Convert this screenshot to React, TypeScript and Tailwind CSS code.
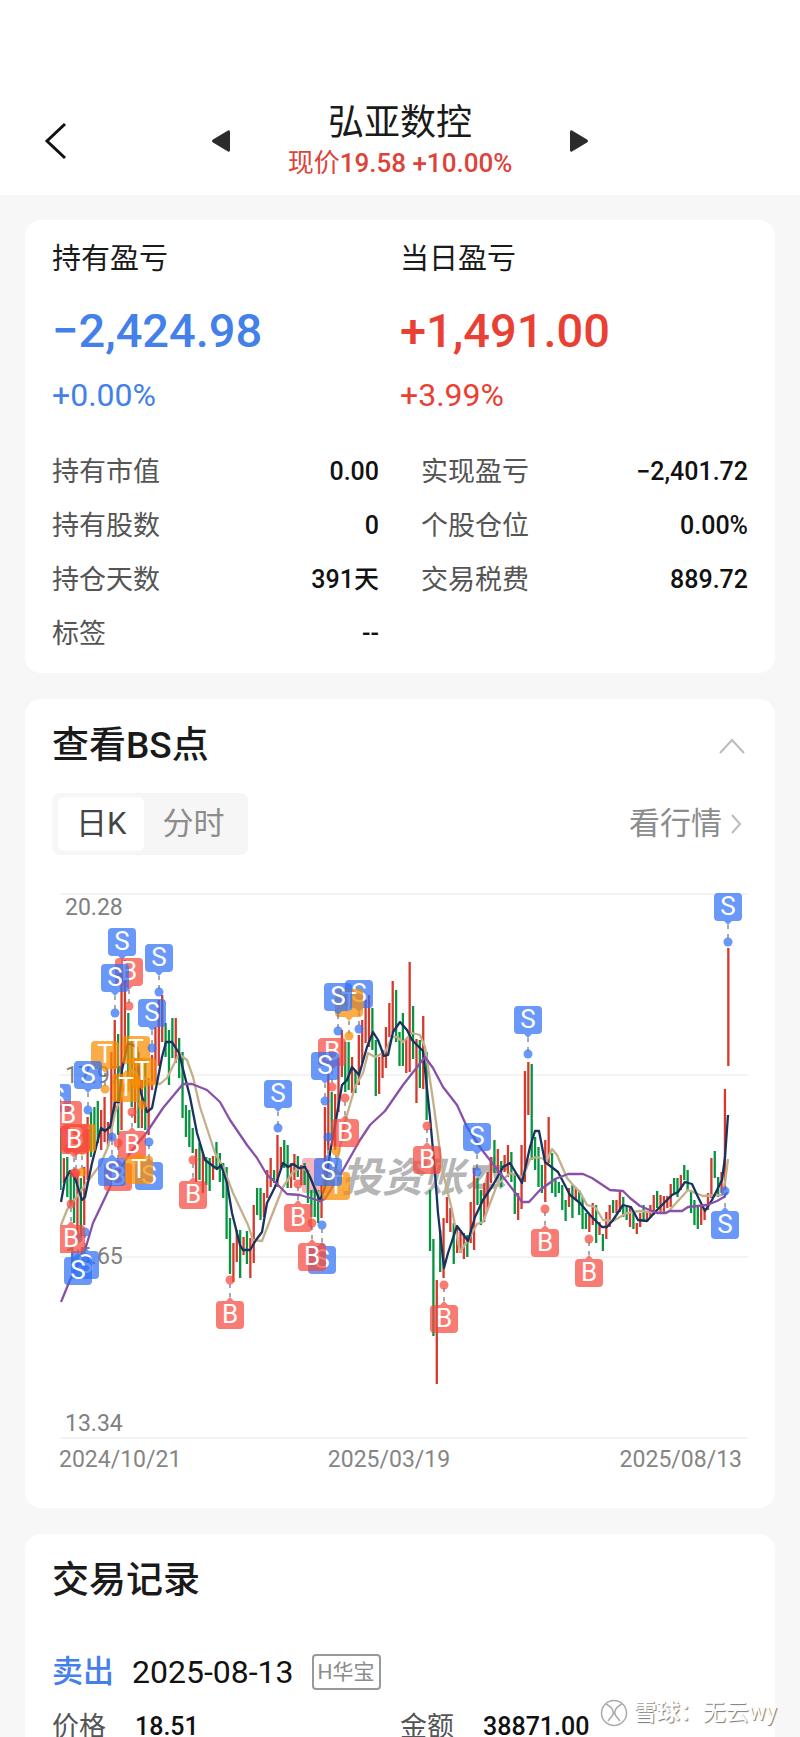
import React, { useState } from 'react';

type Kind = 'S' | 'B' | 'T';

// [high, low, direction] in chart units, one entry per trading day
const CANDLES = `1128,1190,g 1158,1183,r 1157,1197,g 1173,1206,g 1177,1223,g 1173,1235,r 1178,1237,g 1167,1225,r 1117,1180,r 1112,1157,g
1107,1150,g 1101,1143,g 1110,1150,r 1097,1142,r 1122,1147,r 1052,1140,r 1020,1113,r 1034,1135,g 973,1130,r 960,1060,r
1013,1080,g 1040,1107,g 1057,1123,r 1052,1128,g 1058,1128,r 1060,1130,g 1078,1135,r 1055,1090,r 1027,1082,r 1000,1066,r
995,1042,r 1023,1057,g 1030,1085,g 1018,1058,g 1018,1063,r 1038,1078,g 1052,1118,g 1105,1137,g 1110,1147,g 1128,1153,g
1149,1182,r 1143,1180,g 1152,1193,r 1157,1185,g 1158,1191,g 1156,1180,r 1142,1167,g 1153,1182,g 1163,1198,g 1167,1239,g
1218,1274,g 1243,1282,r 1230,1262,r 1230,1278,g 1237,1255,r 1231,1264,g 1238,1278,r 1205,1263,r 1188,1215,g 1188,1220,g
1193,1217,r 1170,1198,r 1158,1187,r 1170,1183,g 1135,1187,r 1147,1170,r 1140,1168,g 1145,1188,g 1163,1188,r 1154,1180,r
1156,1177,g 1165,1185,r 1163,1185,g 1170,1203,g 1190,1217,g 1187,1217,g 1190,1223,g 1185,1218,r 1107,1187,r 1073,1150,r
1092,1140,g 1094,1150,r 1058,1112,r 1030,1077,r 1042,1092,g 1042,1090,g 1057,1093,r 1070,1093,g 1035,1085,r 1020,1063,r
1000,1043,r 995,1047,r 1008,1050,g 1040,1096,g 1057,1094,r 1050,1078,r 1027,1068,r 1003,1037,r 981,1033,r 990,1042,g
1032,1066,g 1013,1066,g 1038,1073,r 962,1072,r 1006,1059,g 1039,1103,r 1040,1088,g 1016,1089,r 1052,1120,g 1190,1251,g
1239,1336,g 1280,1384,r 1230,1272,g 1218,1278,r 1197,1223,r 1208,1232,r 1223,1264,g 1227,1253,r 1232,1253,r 1233,1259,r
1235,1257,g 1202,1243,r 1168,1250,r 1178,1205,g 1190,1225,g 1183,1222,r 1172,1210,r 1157,1183,r 1140,1173,g 1149,1173,r
1161,1187,g 1155,1172,r 1145,1177,r 1152,1182,g 1173,1214,g 1193,1220,r 1145,1209,r 1071,1182,r 1062,1115,r 1064,1160,g
1137,1170,g 1147,1187,g 1165,1193,g 1140,1202,r 1117,1163,r 1153,1193,g 1178,1197,g 1182,1193,g 1185,1210,g 1200,1221,g
1188,1207,r 1185,1218,g 1187,1200,r 1190,1215,g 1197,1229,g 1213,1229,g 1215,1232,r 1203,1225,r 1205,1243,g 1222,1235,r
1234,1251,g 1212,1239,r 1205,1227,r 1200,1213,g 1200,1213,r 1192,1212,r 1197,1217,g 1205,1220,g 1207,1227,r 1212,1229,g
1223,1234,r 1213,1227,r 1205,1220,g 1212,1222,r 1205,1218,r 1195,1215,r 1191,1208,g 1195,1212,r 1196,1213,r 1196,1208,r
1184,1207,r 1178,1195,g 1178,1197,g 1175,1190,r 1165,1180,g 1170,1190,g 1190,1213,g 1200,1225,g 1207,1229,g 1207,1225,r
1208,1220,r 1193,1210,r 1158,1198,r 1151,1178,g 1177,1197,g 1172,1193,r 1089,1190,r 948,1066,r`
  .split(/\s+/)
  .map((entry) => {
    const [high, low, dir] = entry.split(',');
    return { high: Number(high), low: Number(low), up: dir === 'r' };
  });

const MA_SHORT =
  '61,1202 65,1180 70,1171 75,1178 82,1200 85,1197 92,1163 101,1128 105,1131 110,1127 115,1102 119,1102 122,1070 128,1043 137,1047 140,1090 147,1112 152,1108 157,1083 162,1057 166,1042 172,1042 179,1053 190,1097 197,1133 205,1160 217,1169 221,1165 227,1183 232,1213 240,1245 243,1250 250,1250 256,1240 262,1232 267,1203 275,1187 283,1163 288,1167 293,1164 299,1168 305,1167 310,1177 320,1201 325,1187 330,1153 336,1120 342,1085 347,1080 352,1067 359,1075 367,1047 373,1032 378,1040 384,1056 388,1055 393,1032 400,1022 407,1030 412,1040 423,1051 430,1117 435,1173 438,1213 444,1268 448,1253 457,1226 468,1241 475,1217 483,1200 493,1185 503,1167 510,1163 522,1183 530,1147 535,1131 539,1131 545,1162 558,1172 570,1195 580,1203 590,1215 602,1227 607,1227 613,1220 623,1205 631,1207 638,1220 647,1221 657,1210 672,1195 678,1192 685,1182 692,1184 698,1197 705,1211 712,1200 722,1180 725,1157 728,1115';
const MA_MID =
  '61,1225 67,1210 83,1188 100,1165 108,1147 115,1113 122,1093 132,1070 150,1082 160,1084 167,1078 179,1054 187,1060 193,1077 200,1107 215,1153 223,1167 233,1193 248,1225 253,1240 262,1241 272,1215 283,1187 293,1172 302,1167 308,1172 318,1193 325,1198 332,1187 345,1122 355,1087 363,1073 368,1053 375,1057 385,1052 392,1037 397,1037 403,1042 412,1033 420,1035 425,1047 433,1100 443,1173 452,1210 460,1252 470,1237 477,1224 483,1222 497,1185 510,1173 523,1177 530,1159 537,1157 547,1160 552,1149 557,1155 567,1178 573,1185 580,1192 587,1205 595,1207 603,1220 613,1221 627,1213 640,1211 650,1212 667,1213 677,1202 688,1190 703,1196 722,1195 725,1183 728,1159';
const MA_LONG =
  '61,1302 70,1280 85,1250 93,1223 112,1183 130,1153 147,1132 163,1108 183,1084 192,1084 207,1090 220,1102 230,1120 247,1145 257,1158 267,1175 273,1180 287,1194 300,1195 320,1201 325,1199 343,1170 360,1140 370,1125 385,1111 403,1085 425,1057 433,1068 443,1087 457,1105 467,1127 482,1150 500,1173 517,1195 522,1202 529,1202 540,1190 555,1179 568,1174 583,1174 592,1178 610,1190 623,1191 630,1198 640,1206 657,1213 665,1213 670,1211 682,1211 688,1207 707,1205 717,1201 724,1197 727,1192';

// kind, x, badge centre y, dot y
const MARKERS: [Kind, number, number, number][] = [
  ['S', 57, 1098, 1132],
  ['B', 68, 1115, 1149],
  ['T', 82, 1138, 1172],
  ['B', 76, 1138, 1173],
  ['B', 74, 1140, 1173],
  ['S', 85, 1265, 1232],
  ['S', 78, 1271, 1238],
  ['B', 71, 1239, 1204],
  ['T', 105, 1055, 1089],
  ['S', 88, 1075, 1110],
  ['S', 122, 942, 976],
  ['B', 129, 972, 1006],
  ['S', 115, 978, 1013],
  ['S', 159, 958, 992],
  ['T', 136, 1050, 1084],
  ['T', 142, 1072, 1105],
  ['T', 126, 1088, 1088],
  ['S', 152, 1013, 1048],
  ['B', 118, 1177, 1143],
  ['S', 112, 1172, 1137],
  ['B', 132, 1145, 1112],
  ['S', 149, 1176, 1142],
  ['T', 139, 1170, 1160],
  ['B', 193, 1195, 1160],
  ['B', 230, 1315, 1280],
  ['S', 278, 1094, 1128],
  ['B', 298, 1218, 1184],
  ['S', 322, 1260, 1225],
  ['B', 312, 1257, 1223],
  ['B', 332, 1052, 1087],
  ['S', 359, 994, 1029],
  ['T', 349, 1003, 1036],
  ['S', 338, 997, 1031],
  ['S', 325, 1066, 1101],
  ['B', 345, 1133, 1098],
  ['T', 336, 1186, 1151],
  ['S', 328, 1172, 1137],
  ['B', 427, 1160, 1126],
  ['B', 444, 1319, 1285],
  ['S', 477, 1137, 1172],
  ['S', 528, 1020, 1054],
  ['B', 545, 1243, 1209],
  ['B', 589, 1273, 1239],
  ['S', 725, 1225, 1191],
  ['S', 728, 907, 942],
];

const MARKER_COLORS: Record<Kind, string> = { S: '#2f70f5', B: '#f5483e', T: '#fb8c00' };

const PRICE_LEVELS = [
  { label: '20.28', line: 894, text: 915 },
  { label: '17.97', line: 1075, text: 1083 },
  { label: '15.65', line: 1257, text: 1264 },
  { label: '13.34', line: 1438, text: 1431 },
];

const Marker = ({ kind, x, y, dot }: { kind: Kind; x: number; y: number; dot: number }) => {
  const side = dot > y ? 1 : -1;
  const edge = y + side * 18;
  return (
    <g>
      {Math.abs(dot - y) > 18 && <line x1={x} y1={edge} x2={x} y2={dot} stroke="#4b5563" strokeDasharray="4 5" />}
      <g fill={MARKER_COLORS[kind]} fillOpacity="0.72">
        <circle cx={x} cy={dot} r="4.5" />
        <path
          d={
            side > 0
              ? `M${x - 10} ${y - 14}h20a4 4 0 0 1 4 4v20a4 4 0 0 1-4 4h-6l-4 4-4-4h-6a4 4 0 0 1-4-4v-20a4 4 0 0 1 4-4z`
              : `M${x - 10} ${y - 14}h6l4-4 4 4h6a4 4 0 0 1 4 4v20a4 4 0 0 1-4 4h-20a4 4 0 0 1-4-4v-20a4 4 0 0 1 4-4z`
          }
        />
      </g>
      <text x={x} y={y + 8} textAnchor="middle" fontSize="26" fill="#fff">
        {kind}
      </text>
    </g>
  );
};

const KLineChart = () => (
  <svg viewBox="52 884 696 596" className="mt-[29px] block w-full" role="img" aria-label="日K">
    <defs>
      <clipPath id="plot">
        <rect x="60" y="884" width="688" height="596" />
      </clipPath>
    </defs>
    {PRICE_LEVELS.map((level) => (
      <g key={level.label}>
        <line x1="60" x2="748" y1={level.line} y2={level.line} stroke="#f3f3f3" strokeWidth="2" />
        <text x="65" y={level.text} fontSize="23" fill="#808080">
          {level.label}
        </text>
      </g>
    ))}
    <g fontSize="23" fill="#858585">
      <text x="59" y="1467">2024/10/21</text>
      <text x="389" y="1467" textAnchor="middle">2025/03/19</text>
      <text x="742" y="1467" textAnchor="end">2025/08/13</text>
    </g>
    <rect x="302" y="1158" width="30" height="35" rx="3" fill="#f9b4c0" />
    <text x="341" y="1192" fontSize="41" fontWeight="700" fontStyle="italic" fill="#b5b5b5">
      投资账本
    </text>
    <g clipPath="url(#plot)">
      {CANDLES.map((c, i) => (
        <line
          key={i}
          x1={60.5 + i * 3.39}
          x2={60.5 + i * 3.39}
          y1={c.high}
          y2={c.low}
          stroke={c.up ? '#d5382c' : '#069441'}
          strokeWidth="2.3"
        />
      ))}
      <g fill="none" strokeWidth="2.3" strokeLinejoin="round">
        <polyline points={MA_MID} stroke="#c3b08b" />
        <polyline points={MA_SHORT} stroke="#17335f" />
        <polyline points={MA_LONG} stroke="#8850a8" />
      </g>
      {MARKERS.map(([kind, x, y, dot], i) => (
        <Marker key={i} kind={kind} x={x} y={y} dot={dot} />
      ))}
    </g>
  </svg>
);

const Summary = ({ label, amount, percent, color }: { label: string; amount: string; percent: string; color: string }) => (
  <div>
    <h2 className="text-[29px] leading-10 text-[#1a1a1a]">{label}</h2>
    <p className={`mt-6 text-[47px] leading-[56px] font-medium ${color}`}>{amount}</p>
    <p className={`mt-4 text-[32px] leading-10 ${color}`}>{percent}</p>
  </div>
);

const Stat = ({ label, value }: { label: string; value: string }) => (
  <div className="flex justify-between text-[27px] leading-[54px]">
    <dt className="text-[#555]">{label}</dt>
    <dd className="text-[25px] font-medium text-[#111]">{value}</dd>
  </div>
);

const Header = () => (
  <header className="bg-white px-11 pt-[101px] pb-[14px]">
    <div className="grid grid-cols-[1fr_auto_1fr] items-center">
      <div className="flex items-center justify-between">
        <button aria-label="返回">
          <svg width="24" height="40" viewBox="0 0 24 40" fill="none" stroke="#111" strokeWidth="3">
            <path d="M21 3 3 20l18 17" />
          </svg>
        </button>
        <button aria-label="上一只" className="mr-[57px]">
          <svg width="20" height="24" viewBox="0 0 20 24" fill="#2b2b2b">
            <path d="M17 1.500Q19 .8 19 3v18q0 2.200-2 1.500L2 13.500q-2-1.500 0-3z" />
          </svg>
        </button>
      </div>
      <div className="text-center">
        <h1 className="text-[36px] leading-[44px] text-[#1a1a1a]">弘亚数控</h1>
        <p className="text-[26px] leading-9 text-[#dc4439]">
          现价<span className="font-medium">19.58 +10.00%</span>
        </p>
      </div>
      <div>
        <button aria-label="下一只" className="ml-[57px] align-middle">
          <svg width="20" height="24" viewBox="0 0 20 24" fill="#2b2b2b">
            <path d="M3 1.500Q1 .8 1 3v18q0 2.200 2 1.500L18 13.500q2-1.500 0-3z" />
          </svg>
        </button>
      </div>
    </div>
  </header>
);

export default function App() {
  const [period, setPeriod] = useState('日K');
  const [open, setOpen] = useState(true);

  return (
    <div className="relative h-screen overflow-hidden bg-[#f7f7f7] font-[Roboto,'Noto_Sans_CJK_SC',sans-serif]">
      <Header />
      <main className="flex flex-col gap-[26px] p-[25px]">
        <section className="rounded-2xl bg-white px-[27px] pt-[19px] pb-3">
          <div className="grid grid-cols-2">
            <Summary label="持有盈亏" amount="−2,424.98" percent="+0.00%" color="text-[#4380ea]" />
            <Summary label="当日盈亏" amount="+1,491.00" percent="+3.99%" color="text-[#ea4034]" />
          </div>
          <dl className="mt-[30px] grid grid-cols-2 gap-x-[42px]">
            <Stat label="持有市值" value="0.00" />
            <Stat label="实现盈亏" value="−2,401.72" />
            <Stat label="持有股数" value="0" />
            <Stat label="个股仓位" value="0.00%" />
            <Stat label="持仓天数" value="391天" />
            <Stat label="交易税费" value="889.72" />
            <Stat label="标签" value="--" />
          </dl>
        </section>

        <section className="rounded-2xl bg-white px-[27px] pt-[23px] pb-7">
          <div className="flex items-center justify-between">
            <h2 className="text-[37px] leading-[48px] font-medium text-[#1a1a1a]">查看BS点</h2>
            <button aria-label="收起" onClick={() => setOpen(!open)} className="mr-0.5">
              <svg width="28" height="18" viewBox="0 0 28 18" fill="none" stroke="#bbb" strokeWidth="2">
                <path d="M2 16 14 3l12 13" />
              </svg>
            </button>
          </div>
          <div className="mt-[23px] flex items-center justify-between">
            <div className="flex rounded-lg bg-[#f6f6f6] p-1 px-1.5 text-[31px] leading-[54px]">
              {['日K', '分时'].map((name) => (
                <button
                  key={name}
                  onClick={() => setPeriod(name)}
                  className={period === name ? 'rounded-md bg-white px-[18px] text-[#444]' : 'px-[18px] text-[#8c8c8c]'}
                >
                  {name}
                </button>
              ))}
            </div>
            <a href="#quotes" className="flex items-center gap-2 pr-1.5 text-[31px] text-[#8c8c8c]">
              看行情
              <svg width="12" height="22" viewBox="0 0 12 22" fill="none" stroke="#bbb" strokeWidth="2">
                <path d="m2 2 8 9-8 9" />
              </svg>
            </a>
          </div>
          {open && <KLineChart />}
        </section>

        <section className="rounded-2xl bg-white px-[27px] pt-[23px] pb-7">
          <h2 className="text-[37px] leading-[48px] font-medium text-[#1a1a1a]">交易记录</h2>
          <div className="mt-[47px] flex items-center text-[31px] leading-10">
            <span className="font-medium text-[#4380ea]">卖出</span>
            <time className="ml-[18px] text-[32px] text-[#111]">2025-08-13</time>
            <span className="ml-[18px] rounded border-2 border-[#999] px-1 text-[21px] leading-8 text-[#8c8c8c]">H华宝</span>
          </div>
          <dl className="mt-[15px] grid grid-cols-2 text-[27px] leading-10">
            <div className="flex gap-[29px]">
              <dt className="text-[#555]">价格</dt>
              <dd className="text-[25px] font-medium text-[#111]">18.51</dd>
            </div>
            <div className="flex gap-[29px]">
              <dt className="text-[#555]">金额</dt>
              <dd className="text-[25px] font-medium text-[#111]">38871.00</dd>
            </div>
          </dl>
        </section>
      </main>

      <div className="absolute right-[23px] bottom-2 flex items-center gap-1.5 text-[23px] leading-8 text-white [text-shadow:1px_1px_1px_#777]">
        <svg width="28" height="28" viewBox="0 0 28 28" fill="none" stroke="#aaa" strokeWidth="1.500">
          <circle cx="14" cy="14" r="12.500" />
          <path d="M6 5q6 3 7 7 1 2-1 5l-4 5M22 5q-6 3-7 7-1 2 1 5l4 5" />
        </svg>
        <span>
          <b>雪球</b>：无云wy
        </span>
      </div>
    </div>
  );
}
